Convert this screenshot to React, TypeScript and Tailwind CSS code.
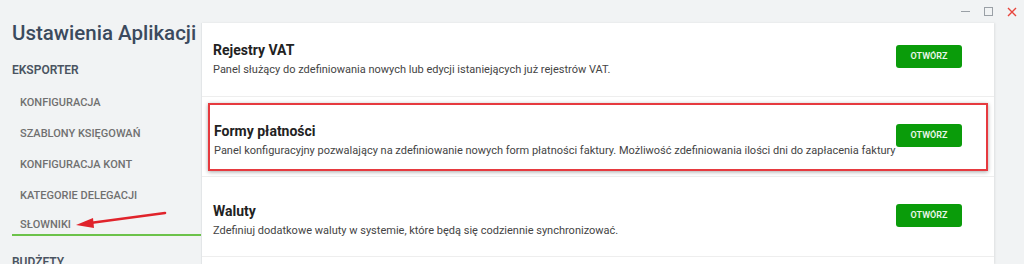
import React from 'react';

type Entry = { title: string; desc: string };

const entries: Entry[] = [
  { title: 'Rejestry VAT', desc: 'Panel służący do zdefiniowania nowych lub edycji istaniejących już rejestrów VAT.' },
  {
    title: 'Formy płatności',
    desc: 'Panel konfiguracyjny pozwalający na zdefiniowanie nowych form płatności faktury. Możliwość zdefiniowania ilości dni do zapłacenia faktury',
  },
  { title: 'Waluty', desc: 'Zdefiniuj dodatkowe waluty w systemie, które będą się codziennie synchronizować.' },
];

const menu = ['KONFIGURACJA', 'SZABLONY KSIĘGOWAŃ', 'KONFIGURACJA KONT', 'KATEGORIE DELEGACJI'];

const OpenButton: React.FC<{ className?: string }> = ({ className }) => (
  <button className={`w-[66px] h-[23px] shrink-0 rounded-[3px] bg-[#0a9c0a] text-[#eaf7ea] text-[9px] font-semibold ${className ?? ''}`}>
    OTWÓRZ
  </button>
);

const EntryText: React.FC<{ entry: Entry; className?: string }> = ({ entry, className }) => (
  <div className={className}>
    <div className="text-[14px] leading-[20px] font-bold text-[#222]">{entry.title}</div>
    <div className="mt-[1px] text-[11px] leading-[18px] text-[#444] whitespace-nowrap">{entry.desc}</div>
  </div>
);

const App: React.FC = () => {
  return (
    <div className="relative w-[1024px] h-[264px] overflow-hidden bg-[#f1f3f4] flex" style={{ fontFamily: 'Roboto, "Noto Sans", sans-serif' }}>
      {/* Sidebar */}
      <div className="w-[201px] shrink-0 pt-[20px]">
        <h1 className="pl-3 text-[20.5px] leading-[26px] font-medium text-[#3b4a5d] whitespace-nowrap">Ustawienia Aplikacji</h1>
        <div className="mt-[15px] pl-3 text-[12px] leading-[18px] font-semibold text-[#4a5361]">EKSPORTER</div>
        <ul className="mt-[9px]">
          {menu.map(m => (
            <li key={m} className="h-[31px] flex items-center pl-5 text-[11px] font-medium text-[#707070]">{m}</li>
          ))}
          <li className="ml-3 pl-2 pt-[6px] pb-[2px] leading-[14px] text-[11px] font-medium text-[#707070] border-b-2 border-[#6cc24a]">SŁOWNIKI</li>
        </ul>
        <div className="mt-[17px] pl-3 text-[12px] leading-[18px] font-semibold text-[#4a5361]">BUDŻETY</div>
      </div>

      {/* Main */}
      <div className="flex-1 flex flex-col">
        <div className="h-[23px] shrink-0 flex items-center justify-end gap-[14px] pr-[6px]">
          <span className="w-[9px] h-px bg-[#9aa0a6]" />
          <span className="w-[9px] h-[9px] border border-[#9aa0a6]" />
          <svg width="10" height="10" viewBox="0 0 10 10" className="mr-[1px]">
            <path d="M1 1 L9 9 M9 1 L1 9" stroke="#e8453c" strokeWidth="1.4" />
          </svg>
        </div>
        <div className="mr-[30px] flex-1 bg-white border-l border-[#e3e6e8] shadow-[1px_0_2px_rgba(0,0,0,0.08)]">
          <div className="h-[74px] flex justify-between pl-[11px] pr-8 border-b border-[#eeeeee]">
            <EntryText entry={entries[0]} className="pt-[17px]" />
            <OpenButton className="mt-[22px]" />
          </div>
          <div className="h-[80px] pt-[6px] px-[6px] border-b border-[#eeeeee]">
            <div className="h-[68px] flex justify-between pl-[4px] pr-[24px] border-2 border-[#e63a3f] shadow-[0_1px_4px_rgba(0,0,0,0.35)]">
              <EntryText entry={entries[1]} className="pt-[16px]" />
              <OpenButton className="mt-[19px]" />
            </div>
          </div>
          <div className="h-[80px] flex justify-between pl-[11px] pr-8 border-b border-[#eeeeee]">
            <EntryText entry={entries[2]} className="pt-[24px]" />
            <OpenButton className="mt-[27px]" />
          </div>
        </div>
      </div>

      {/* annotation arrow */}
      <svg className="absolute left-0 top-0 pointer-events-none" width="200" height="264" viewBox="0 0 200 264">
        <line x1="165" y1="213" x2="90" y2="223" stroke="#e0232b" strokeWidth="2.6" strokeLinecap="round" />
        <polygon points="76,225 93,218 94,228" fill="#e0232b" />
      </svg>
    </div>
  );
};

export default App;
